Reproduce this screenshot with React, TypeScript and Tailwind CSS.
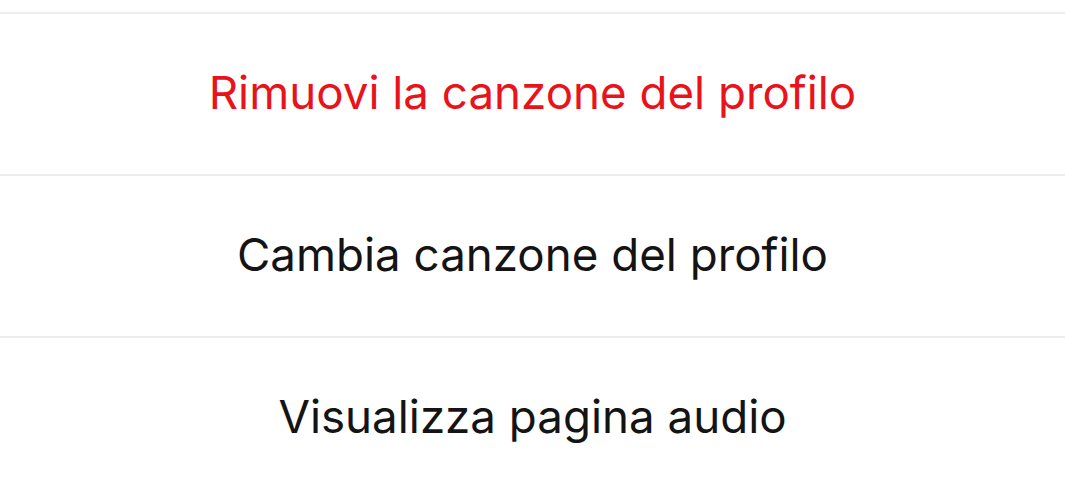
export default function App() {
  const rows = [
    { label: "Rimuovi la canzone del profilo", danger: true },
    { label: "Cambia canzone del profilo", danger: false },
    { label: "Visualizza pagina audio", danger: false },
  ];

  return (
    <div className="w-[1065px] h-[483px] overflow-hidden bg-white pt-3 font-['Inter','Roboto',sans-serif]">
      {rows.map((row) => (
        <button
          key={row.label}
          className={`flex h-[162px] w-full items-center justify-center border-t-2 border-[#ececec] pb-[2px] text-[45.7px] ${
            row.danger ? "text-[#e8131b]" : "text-[#141414]"
          }`}
        >
          {row.label}
        </button>
      ))}
    </div>
  );
}
